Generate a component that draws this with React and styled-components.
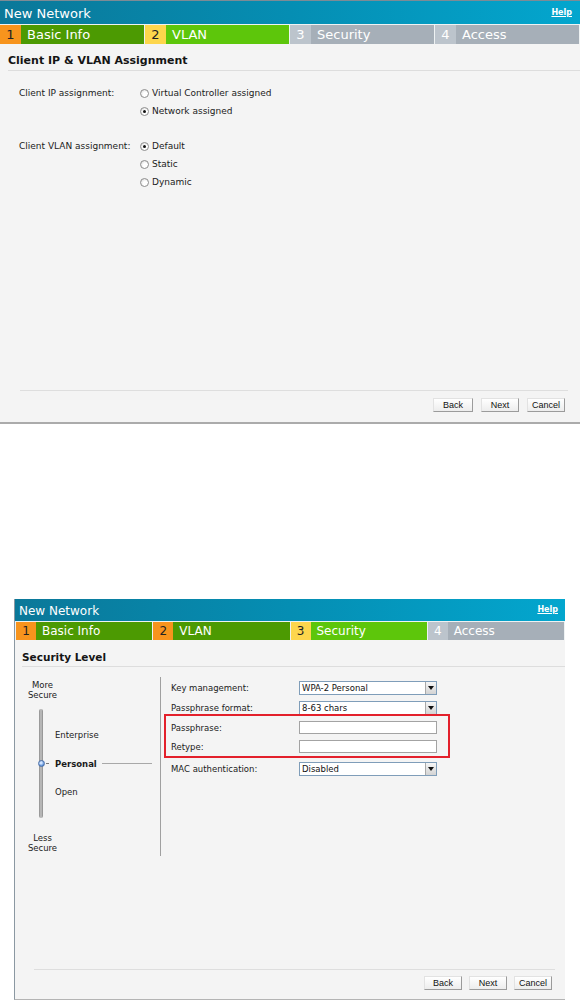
import React from 'react';
import styled, { createGlobalStyle, css } from 'styled-components';

const Global = createGlobalStyle`
  html, body { margin: 0; padding: 0; background: #ffffff; }
  body { font-family: "DejaVu Sans", Verdana, sans-serif; color: #1b1b1b; }
  * { box-sizing: border-box; }
`;

const WIDE = {
  inset: 0, width: 580, height: 424, top: 0,
  titleH: 23, titleFs: 13, titlePl: 4, helpPr: 8,
  tabH: 20, tabFs: 13, numW: 21, tabPl: 0, tabPr: 1,
  headFs: 11, headMt: 10, headMl: 8,
  btnW: [40, 38, 38], btnGap: 8, footMl: 20, footMr: 12, footPt: 7, footPb: 10,
};

const COMPACT = {
  inset: 14, width: 551, height: 401, top: 175,
  titleH: 22, titleFs: 12, titlePl: 4, helpPr: 7,
  tabH: 19, tabFs: 12, numW: 20, tabPl: 1, tabPr: 1,
  headFs: 10.5, headMt: 10, headMl: 7,
  btnW: [38, 38, 38], btnGap: 7, footMl: 19, footMr: 10, footPt: 6, footPb: 9,
};

const TAB_COLORS = {
  done: { num: '#f7941d', numText: '#222', label: '#4c9a02' },
  current: { num: '#fdd64c', numText: '#222', label: '#5dc60b' },
  todo: { num: '#bcc4cc', numText: '#ffffff', label: '#a6afb8' },
};

const Page = styled.div`
  width: 580px;
  display: flex;
  flex-direction: column;
`;

const Panel = styled.section`
  display: flex;
  flex-direction: column;
  margin-left: ${(p) => p.$s.inset}px;
  margin-top: ${(p) => p.$s.top}px;
  width: ${(p) => p.$s.width}px;
  height: ${(p) => p.$s.height}px;
  background: #f4f4f4;
  ${(p) =>
    p.$compact
      ? css`
          border-left: 1px solid #8b98a2;
          border-bottom: 1px solid #b4b4b4;
        `
      : css`
          border-top: 1px solid #7d8b95;
          border-bottom: 2px solid #ababab;
        `}
`;

const TitleBar = styled.header`
  flex: none;
  height: ${(p) => p.$s.titleH}px;
  display: flex;
  align-items: center;
  justify-content: space-between;
  padding: 0 ${(p) => p.$s.helpPr}px 0 ${(p) => p.$s.titlePl}px;
  background: linear-gradient(90deg, #0b7899 0%, #058eb3 50%, #03a6ce 100%);
  color: #ffffff;
`;

const Title = styled.h1`
  margin: 0;
  font-size: ${(p) => p.$s.titleFs}px;
  font-weight: normal;
  line-height: 1;
  padding-top: 1px;
`;

const Help = styled.a`
  color: #ffffff;
  font-size: 8px;
  font-weight: bold;
  text-decoration: underline;
  line-height: 1;
`;

const TabBar = styled.nav`
  flex: none;
  display: flex;
  gap: 1px;
  height: ${(p) => p.$s.tabH}px;
  padding: 1px ${(p) => p.$s.tabPr}px 0 ${(p) => p.$s.tabPl}px;
  background: #eef2f3;
`;

const Tab = styled.div`
  flex: 1;
  display: flex;
  font-size: ${(p) => p.$s.tabFs}px;
`;

const TabNum = styled.span`
  flex: none;
  width: ${(p) => p.$s.numW}px;
  display: flex;
  align-items: center;
  justify-content: center;
  background: ${(p) => TAB_COLORS[p.$state].num};
  color: ${(p) => TAB_COLORS[p.$state].numText};
`;

const TabLabel = styled.span`
  flex: 1;
  display: flex;
  align-items: center;
  padding-left: 6px;
  background: ${(p) => TAB_COLORS[p.$state].label};
  color: #ffffff;
`;

const Body = styled.div`
  flex: 1;
  display: flex;
  flex-direction: column;
`;

const Heading = styled.h2`
  margin: ${(p) => p.$s.headMt}px 0 0 ${(p) => p.$s.headMl}px;
  padding-bottom: 2px;
  font-size: ${(p) => p.$s.headFs}px;
  line-height: 14px;
  font-weight: bold;
  color: #151515;
  border-bottom: 1px solid #dddddd;
`;

/* ---------- panel 1 form ---------- */

const FieldGrid = styled.div`
  display: grid;
  grid-template-columns: 121px 1fr;
  margin: ${(p) => p.$mt}px 0 0 19px;
  font-size: 9px;
`;

const FieldLabel = styled.div`
  line-height: 18px;
`;

const OptionList = styled.div`
  display: flex;
  flex-direction: column;
`;

const Option = styled.label`
  height: 18px;
  display: flex;
  align-items: center;
  gap: 3px;
`;

const Radio = styled.span`
  flex: none;
  position: relative;
  width: 9px;
  height: 9px;
  border-radius: 50%;
  border: 1px solid #8e8e8e;
  background: radial-gradient(circle at 65% 65%, #ffffff 0 35%, #d4d4d4 100%);
  ${(p) =>
    p.$on &&
    css`
      &::after {
        content: '';
        position: absolute;
        left: 2px;
        top: 2px;
        width: 3px;
        height: 3px;
        border-radius: 50%;
        background: #111111;
      }
    `}
`;

/* ---------- panel 2 security ---------- */

const SecurityRow = styled.div`
  display: flex;
  margin-top: 10px;
  font-size: 8.5px;
`;

const LevelColumn = styled.div`
  flex: none;
  width: 146px;
  border-right: 1px solid #a0a0a0;
  padding: 3px 0 3px 0;
  display: flex;
  flex-direction: column;
`;

const EndLabel = styled.div`
  width: 55px;
  text-align: center;
  line-height: 10px;
  margin-top: ${(p) => p.$mt || 0}px;
`;

const SliderArea = styled.div`
  display: flex;
  height: 109px;
  margin: 9px 0 0 24px;
`;

const Track = styled.div`
  flex: none;
  position: relative;
  width: 4px;
  border-radius: 2px;
  background: linear-gradient(90deg, #8c8c8c, #c4c4c4 50%, #8a8a8a);
`;

const Knob = styled.span`
  position: absolute;
  left: -1.5px;
  top: 50%;
  width: 7px;
  height: 7px;
  margin-top: -3.5px;
  border-radius: 50%;
  background: radial-gradient(circle at 40% 35%, #cfe3ff 0 20%, #5c8fd6 70%, #3b6cb4 100%);
  border: 1px solid #4a6fa8;
  &::after {
    content: '';
    position: absolute;
    left: 7px;
    top: 2px;
    width: 3px;
    height: 1px;
    background: #777777;
  }
`;

const LevelList = styled.div`
  display: flex;
  flex-direction: column;
  justify-content: center;
  margin-left: 12px;
  width: 97px;
`;

const LevelRow = styled.div`
  height: 28.5px;
  display: flex;
  align-items: center;
  font-weight: ${(p) => (p.$active ? 'bold' : 'normal')};
`;

const LevelRule = styled.span`
  flex: 1;
  height: 1px;
  margin-left: 5px;
  background: #a8a8a8;
`;

const SettingsColumn = styled.div`
  flex: 1;
  padding: 1px 0 0 10px;
  display: flex;
  flex-direction: column;
`;

const SettingRow = styled.div`
  display: grid;
  grid-template-columns: 128px 138px;
  align-items: center;
  height: ${(p) => p.$h || 20}px;
`;

const Highlight = styled.div`
  margin: -4px 0 1px -7px;
  width: 286px;
  padding: 2px 0 0 5px;
  border: 2px solid #e3202b;
`;

const Select = styled.div`
  height: 14px;
  display: flex;
  align-items: center;
  justify-content: space-between;
  padding-left: 2px;
  background: #ffffff;
  border: 1px solid #7f9db9;
  font-size: 8.5px;
  color: #111111;
`;

const SelectArrow = styled.span`
  width: 11px;
  height: 12px;
  display: flex;
  align-items: center;
  justify-content: center;
  background: linear-gradient(#f6f6f6, #d3d3d3);
  border-left: 1px solid #a9a9a9;
  &::before {
    content: '';
    border-left: 3px solid transparent;
    border-right: 3px solid transparent;
    border-top: 4px solid #111111;
  }
`;

const TextInput = styled.div`
  height: 13px;
  background: #ffffff;
  border: 1px solid #a3a3a3;
`;

/* ---------- footer ---------- */

const Footer = styled.footer`
  flex: none;
  display: flex;
  justify-content: flex-end;
  gap: ${(p) => p.$s.btnGap}px;
  margin: 0 ${(p) => p.$s.footMr}px 0 ${(p) => p.$s.footMl}px;
  padding: ${(p) => p.$s.footPt}px 3px ${(p) => p.$s.footPb}px 0;
  border-top: 1px solid #dedede;
`;

const Button = styled.button`
  width: ${(p) => p.$w}px;
  height: 14px;
  padding: 0;
  font: 9px "Liberation Sans", Arial, sans-serif;
  color: #111111;
  background: linear-gradient(#ffffff, #ededed);
  border: 1px solid;
  border-color: #e2e2e2 #9b9b9b #9b9b9b #e2e2e2;
`;

const STEPS = ['Basic Info', 'VLAN', 'Security', 'Access'];

function Wizard({ s, current, compact, children }) {
  return (
    <Panel $s={s} $compact={compact}>
      <TitleBar $s={s}>
        <Title $s={s}>New Network</Title>
        <Help href="#help">Help</Help>
      </TitleBar>
      <TabBar $s={s}>
        {STEPS.map((name, i) => {
          const state = i < current ? 'done' : i === current ? 'current' : 'todo';
          return (
            <Tab key={name} $s={s}>
              <TabNum $s={s} $state={state}>{i + 1}</TabNum>
              <TabLabel $state={state}>{name}</TabLabel>
            </Tab>
          );
        })}
      </TabBar>
      <Body>{children}</Body>
      <Footer $s={s}>
        <Button $w={s.btnW[0]}>Back</Button>
        <Button $w={s.btnW[1]}>Next</Button>
        <Button $w={s.btnW[2]}>Cancel</Button>
      </Footer>
    </Panel>
  );
}

function RadioField({ label, options, mt }) {
  return (
    <FieldGrid $mt={mt}>
      <FieldLabel>{label}</FieldLabel>
      <OptionList>
        {options.map((o) => (
          <Option key={o.text}>
            <Radio $on={o.on} />
            {o.text}
          </Option>
        ))}
      </OptionList>
    </FieldGrid>
  );
}

function SelectBox({ value }) {
  return (
    <Select>
      <span>{value}</span>
      <SelectArrow />
    </Select>
  );
}

export default function App() {
  return (
    <Page>
      <Global />
      <Wizard s={WIDE} current={1}>
        <Heading $s={WIDE}>Client IP &amp; VLAN Assignment</Heading>
        <RadioField
          mt={13}
          label="Client IP assignment:"
          options={[
            { text: 'Virtual Controller assigned' },
            { text: 'Network assigned', on: true },
          ]}
        />
        <RadioField
          mt={17}
          label="Client VLAN assignment:"
          options={[
            { text: 'Default', on: true },
            { text: 'Static' },
            { text: 'Dynamic' },
          ]}
        />
      </Wizard>

      <Wizard s={COMPACT} current={2} compact>
        <Heading $s={COMPACT}>Security Level</Heading>
        <SecurityRow>
          <LevelColumn>
            <EndLabel>More<br />Secure</EndLabel>
            <SliderArea>
              <Track>
                <Knob />
              </Track>
              <LevelList>
                <LevelRow>Enterprise</LevelRow>
                <LevelRow $active>
                  Personal
                  <LevelRule />
                </LevelRow>
                <LevelRow>Open</LevelRow>
              </LevelList>
            </SliderArea>
            <EndLabel $mt={15}>Less<br />Secure</EndLabel>
          </LevelColumn>
          <SettingsColumn>
            <SettingRow>
              <span>Key management:</span>
              <SelectBox value="WPA-2 Personal" />
            </SettingRow>
            <SettingRow>
              <span>Passphrase format:</span>
              <SelectBox value="8-63 chars" />
            </SettingRow>
            <Highlight>
              <SettingRow $h={19}>
                <span>Passphrase:</span>
                <TextInput />
              </SettingRow>
              <SettingRow $h={19}>
                <span>Retype:</span>
                <TextInput />
              </SettingRow>
            </Highlight>
            <SettingRow>
              <span>MAC authentication:</span>
              <SelectBox value="Disabled" />
            </SettingRow>
          </SettingsColumn>
        </SecurityRow>
      </Wizard>
    </Page>
  );
}
